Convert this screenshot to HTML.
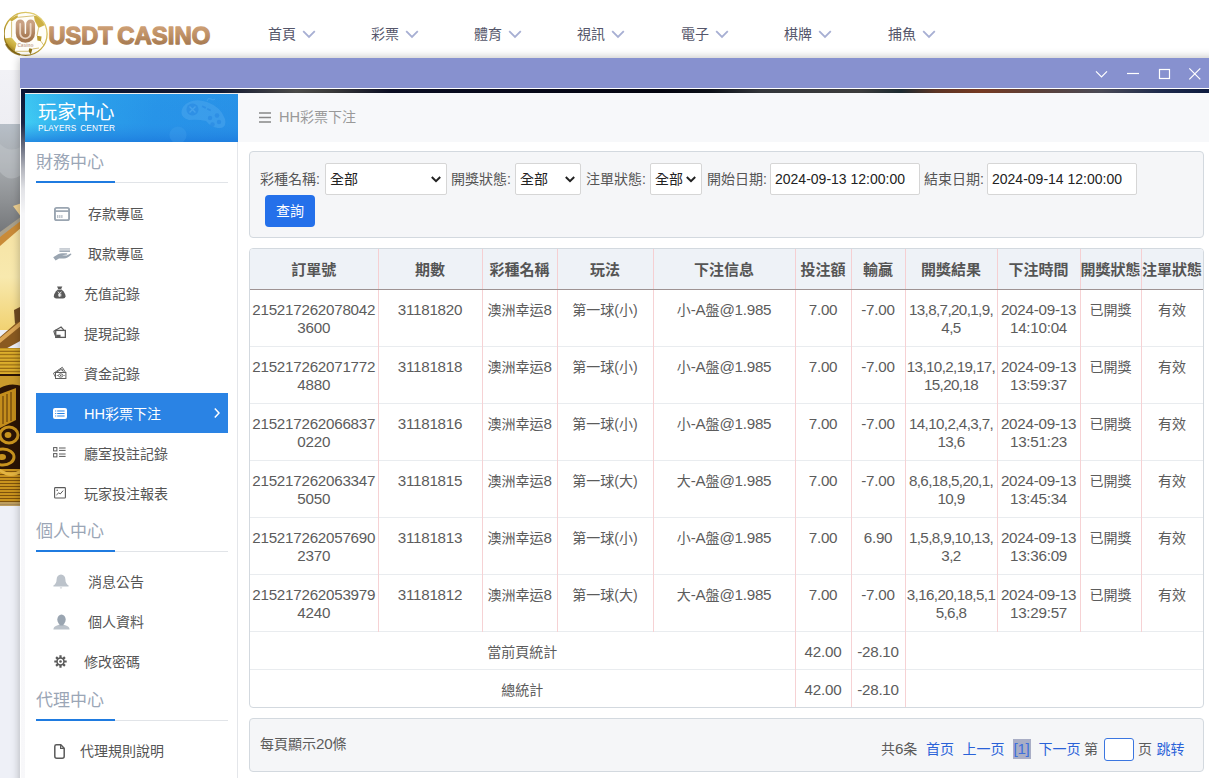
<!DOCTYPE html>
<html lang="zh-Hant">
<head>
<meta charset="utf-8">
<title>USDT CASINO</title>
<style>
*{box-sizing:border-box;margin:0;padding:0}
html,body{width:1209px;height:778px;overflow:hidden;background:#eef0f7}
body{font-family:"Liberation Sans","Noto Sans CJK TC","Noto Sans CJK SC",sans-serif;color:#555;position:relative}
/* ---------- page behind ---------- */
#hdr{position:absolute;left:0;top:0;width:1209px;height:70px;background:#fff}
#sub{position:absolute;left:0;top:70px;width:1209px;height:55px;background:linear-gradient(#f2f2f6,#eeeef3)}
#banner{position:absolute;left:0;top:124px;width:22px;height:382px}
#logo{position:absolute;left:4px;top:6px;width:212px;height:54px}
.nav{position:absolute;top:24px;font-size:14px;color:#55566a;line-height:20px;white-space:nowrap}
.nav svg{position:absolute;left:34px;top:6px}
/* ---------- window ---------- */
#win{position:absolute;left:20px;top:58px;width:1240px;height:760px;box-shadow:0 0 9px rgba(0,0,0,.28)}
#tb{position:absolute;left:0;top:0;width:100%;height:30px;background:#8791cf}
#tb svg{position:absolute;top:0;left:0}
#wb{position:absolute;left:0;top:30px;width:100%;height:730px;background:#fff;border:1px solid #fff;overflow:hidden}
#wbg{position:absolute;left:0;top:0;width:100%;height:100%;
 background:linear-gradient(90deg,#0a1230 0,#131a33 200px,#4a4a48 275px,#3a3a3a 310px,#0a0d22 370px,#03040f 640px,#0c1018 690px,#33363a 740px,#3c3c3c 840px,#1c2a30 880px,#5c3424 915px,#763a22 960px,#5c4038 1015px,#4a4a55 1080px,#1e2a4c 1140px,#0c1a3e 1189px)}
#wbgl{position:absolute;left:0;top:0;width:5px;height:100%;background:linear-gradient(180deg,#0b1534 0,#1a2545 34px,#6a6f80 58px,#b4b6be 80px,#e2e3e7 100px,#f6f6f8 125px,#f8f8fa 100%)}
#app{position:absolute;left:4px;top:4px;width:1236px;height:730px;background:#fff}
/* sidebar */
#side{position:absolute;left:0;top:0;width:213px;height:730px;background:#fff;border-right:1px solid #e4e6ea}
#sh{position:absolute;left:0;top:0;width:213px;height:49px;background:linear-gradient(105deg,#42d2f4 0,#38bbf0 14%,#2b9fea 34%,#2794e8 60%,#2890e7 100%);overflow:hidden;color:#fff}
#sh .t1{position:absolute;left:13px;top:7.5px;font-size:19px;line-height:24px;letter-spacing:.2px}
#sh .t2{position:absolute;left:13px;top:30px;font-size:8.3px;line-height:11px;letter-spacing:.1px;word-spacing:1.5px}
.sec{position:absolute;left:11px;width:192px;height:40px;font-size:17px;color:#9ba6b6;border-bottom:1px solid #e1e4e8}
.sec span{position:absolute;left:0;top:9px;line-height:22px}
.sec i{position:absolute;left:0;bottom:-1px;width:79px;height:2px;background:#1f7be0}
.mi{position:absolute;left:11px;width:192px;height:40px;font-size:14px;line-height:40px;color:#555;white-space:nowrap}
.mi>span{position:absolute;top:1px}
.mi svg{position:absolute}
.mi.on{background:#2a83e4;color:#fff}
/* main */
#main{position:absolute;left:213px;top:0;width:1023px;height:730px;background:#fff}
#crumb{position:absolute;left:0;top:0;width:100%;height:49px;background:#f7f8fa;font-size:14px;color:#999;line-height:49px}
.panel{position:absolute;left:11px;width:955px;background:#f5f6f8;border:1px solid #d3d9df;border-radius:4px}
.flt{font-size:14px;color:#555}
.flt .lb{position:absolute;top:17px;line-height:20px;white-space:nowrap}
.flt .sel,.flt .inp{position:absolute;top:11px;height:32px;background:#fff;border:1px solid #d6d6d6;border-radius:2px;font-size:14px;line-height:30px;color:#222;padding-left:4px;white-space:nowrap}
.flt .sel svg{position:absolute;right:5px;top:12px}
#btn{position:absolute;left:15px;top:43px;width:50px;height:32px;background:#2470ea;border-radius:4px;color:#fff;font-size:14px;line-height:32px;text-align:center}
/* table */
#tp{background:#fff;overflow:hidden}
table{border-collapse:collapse;table-layout:fixed;width:953px;font-size:14px;color:#5c5c5c}
.n{font-size:15.2px;letter-spacing:-.25px}
td.r{white-space:nowrap;letter-spacing:-.62px;overflow:hidden}
th{height:40px;background:#eef2f7;font-weight:bold;font-size:15px;color:#555;border-bottom:1px solid #9e9393;border-left:1px solid #f5cfd2;text-align:center;white-space:nowrap;overflow:hidden;padding:0}
td{vertical-align:top;text-align:center;padding:11px 0 0 0;height:57px;line-height:18.6px;border-top:1px solid #e9ecef;border-left:1px solid #f6d2d4;word-break:break-all}
th:first-child,td:first-child{border-left:0}
th:last-child,tr:not(.sum) td:last-child{border-right:1px solid #f6d2d4}
tr.sum td{height:38px;padding-top:11px}
tr.sum td.nb{border-left:0}
#pg{font-size:14px;color:#5c5c5c;line-height:20px}
#pg span{position:absolute;top:20px;white-space:nowrap}
#pg b{font-weight:normal}
</style>
</head>
<body>
<div id="hdr"></div>
<div id="sub"></div>
<svg id="banner" viewBox="0 0 22 382">
<defs>
<linearGradient id="bg1" x1="0" y1="0" x2="0" y2="1"><stop offset="0" stop-color="#b7bfc8"/><stop offset=".3" stop-color="#a9adb1"/><stop offset=".6" stop-color="#8f9295"/><stop offset="1" stop-color="#686a6d"/></linearGradient>
<linearGradient id="bg2" x1="0" y1="0" x2="0" y2="1"><stop offset="0" stop-color="#f6e3a4"/><stop offset=".5" stop-color="#f8e9ae"/><stop offset="1" stop-color="#f1d272"/></linearGradient>
<pattern id="st1" width="22" height="3.4" patternUnits="userSpaceOnUse"><rect width="22" height="3.4" fill="#dcae2c"/><rect y="2.3" width="22" height="1.1" fill="#8f6210"/></pattern>
<pattern id="st2" width="22" height="3" patternUnits="userSpaceOnUse"><rect width="22" height="3" fill="#c9931e"/><rect y="2" width="22" height="1" fill="#7e520c"/></pattern>
</defs>
<rect width="22" height="125" fill="url(#bg1)"/>
<path d="M0 20 Q10 30 22 22 V50 Q10 60 0 48Z" fill="#c3c8cc" opacity=".45"/>
<path d="M13 82 L22 79 V94Z" fill="#f0d292"/>
<path d="M0 119 L22 100 V206 L0 206Z" fill="url(#bg2)"/>
<path d="M0 112 L22 95 V103 L0 122Z" fill="#c98b38"/>
<path d="M0 108 L22 92 V96 L0 113Z" fill="#a9a08c"/>
<path d="M0 213 L22 194 V216 L0 228Z" fill="#8a5a20"/>
<path d="M0 214 L22 196 V201 L0 219Z" fill="#dba656"/>
<path d="M14 186 L22 182 V196 L15 200Z" fill="#6e4a22"/>
<rect y="224" width="22" height="28" fill="url(#st1)"/>
<path d="M0 213 L0 228 L12 222 L22 216 V212Z" fill="#8a5a20" opacity=".0"/>
<rect y="250" width="22" height="96" fill="#2b1405"/>
<path d="M0 252 H22 V262 Q10 258 0 264Z" fill="#c99a2c"/>
<path d="M0 270 L16 264 V296 L0 304Z" fill="#c48d1c"/>
<path d="M3 272 V300 M7 270 V298 M11 268 V297" stroke="#6b430a" stroke-width="1.2"/>
<ellipse cx="9" cy="311" rx="9" ry="8" fill="none" stroke="#c9931e" stroke-width="3"/>
<ellipse cx="8" cy="311" rx="3.4" ry="3" fill="#c9931e"/>
<ellipse cx="3" cy="333" rx="11" ry="8" fill="none" stroke="#c9931e" stroke-width="3"/>
<ellipse cx="2" cy="333" rx="4" ry="3" fill="#c9931e"/>
<rect y="345" width="22" height="37" fill="url(#st2)"/>
<path d="M0 345 Q11 352 22 345 V348 Q11 356 0 348Z" fill="#e3b442"/>
<rect y="378" width="22" height="4" fill="#b9a27a" opacity=".7"/>
</svg>
<svg id="logo" viewBox="0 0 212 54">
<defs>
<linearGradient id="gtx" x1="0" y1="0" x2="0" y2="1"><stop offset="0" stop-color="#d6a87e"/><stop offset=".5" stop-color="#bd8f64"/><stop offset="1" stop-color="#9c7048"/></linearGradient>
<linearGradient id="gring" x1=".9" y1="0" x2=".1" y2="1"><stop offset="0" stop-color="#e7d680"/><stop offset=".5" stop-color="#c9ad3e"/><stop offset="1" stop-color="#7d5f0c"/></linearGradient>
<linearGradient id="gpat" x1=".8" y1="0" x2=".2" y2="1"><stop offset="0" stop-color="#e2cf66"/><stop offset=".5" stop-color="#c7a93a"/><stop offset="1" stop-color="#7a5c0a"/></linearGradient>
<linearGradient id="gu" x1="0" y1="0" x2="0" y2="1"><stop offset="0" stop-color="#c9a183"/><stop offset="1" stop-color="#a3764e"/></linearGradient>
<clipPath id="cb"><circle cx="21.6" cy="27.9" r="21.8"/></clipPath>
</defs>
<circle cx="21.6" cy="27.9" r="21.8" fill="#fffef8"/>
<g clip-path="url(#cb)">
<path d="M29.9 9.8 L36.1 10.6 L41.1 19 L34.5 22.1 L30.7 14.4Z" fill="#cdb044"/>
<path d="M36.1 10.6 L41.1 19 L43.6 20 L43 12 L38 8Z" fill="#d8c468" opacity=".8"/>
<path d="M.2 32.4 L7.6 31.4 L12.6 37.5 L10.6 45.3 L3.7 42.2Z" fill="url(#gpat)"/>
<path d="M5.3 13.6 L13.3 9 L14.1 11.3 L7.6 15.6Z" fill="#c9ad40"/>
<path d="M33 29.8 L37.6 30.6 L36.9 35.2 L33.4 34.5Z" fill="#b99a2c"/>
<path d="M25.3 42.2 L28.4 43 L26.8 48.3 L24.5 45.3Z" fill="#8f7316"/>
<path d="M3.7 42.2 L10.6 45.3 L14 50 L8 49Z" fill="#7d600c" opacity=".85"/>
<g stroke="#c4a53a" stroke-width=".8" fill="none" opacity=".85"><path d="M14.1 11.3 L29.9 9.8 M7.6 15.6 L7.6 31.4 M34.5 22.1 L33 29.8 M36.9 35.2 L41 41 M28.4 43 L35 42 M10.6 45.3 L24.5 45.3 M26.8 48.3 L26 52 M13.3 9 L15 5.6"/></g>
</g>
<circle cx="21.6" cy="27.9" r="21.5" fill="none" stroke="url(#gring)" stroke-width="1.3"/>
<path d="M2 38 A21.5 21.5 0 0 0 16 48.8" fill="none" stroke="#7d600c" stroke-width="2.2" opacity=".8"/>
<path d="M16.2 17.9 V27.2 a5.2 5.2 0 0 0 10.4 0 V17.9" fill="none" stroke="url(#gu)" stroke-width="8.9" stroke-linecap="round"/>
<path d="M16.2 17.9 V27.2 a5.2 5.2 0 0 0 10.4 0 V17.9" fill="none" stroke="#efdccb" stroke-width="1.8" stroke-linecap="round" opacity=".9"/>
<text x="21.4" y="41.4" text-anchor="middle" font-family="Liberation Sans, sans-serif" font-size="4.8" font-weight="bold" fill="#b48c72" stroke="#fff" stroke-width=".15">Casino</text>
<g font-family="Liberation Sans, sans-serif" font-weight="bold" font-size="24.2" fill="url(#gtx)" stroke="url(#gtx)" stroke-width="1.3" stroke-linejoin="round">
<text x="44.6" y="37.9" textLength="64.1" lengthAdjust="spacingAndGlyphs">USDT</text>
<text x="113.3" y="37.9" textLength="93" lengthAdjust="spacingAndGlyphs">CASINO</text>
</g>
</svg>
<div class="nav" style="left:268px">首頁<svg width="14" height="9" viewBox="0 0 14 9"><path d="M1.2 1.2 L7 7 L12.8 1.2" fill="none" stroke="#a7afd3" stroke-width="1.8"/></svg></div>
<div class="nav" style="left:371px">彩票<svg width="14" height="9" viewBox="0 0 14 9"><path d="M1.2 1.2 L7 7 L12.8 1.2" fill="none" stroke="#a7afd3" stroke-width="1.8"/></svg></div>
<div class="nav" style="left:474px">體育<svg width="14" height="9" viewBox="0 0 14 9"><path d="M1.2 1.2 L7 7 L12.8 1.2" fill="none" stroke="#a7afd3" stroke-width="1.8"/></svg></div>
<div class="nav" style="left:577px">視訊<svg width="14" height="9" viewBox="0 0 14 9"><path d="M1.2 1.2 L7 7 L12.8 1.2" fill="none" stroke="#a7afd3" stroke-width="1.8"/></svg></div>
<div class="nav" style="left:681px">電子<svg width="14" height="9" viewBox="0 0 14 9"><path d="M1.2 1.2 L7 7 L12.8 1.2" fill="none" stroke="#a7afd3" stroke-width="1.8"/></svg></div>
<div class="nav" style="left:784px">棋牌<svg width="14" height="9" viewBox="0 0 14 9"><path d="M1.2 1.2 L7 7 L12.8 1.2" fill="none" stroke="#a7afd3" stroke-width="1.8"/></svg></div>
<div class="nav" style="left:888px">捕魚<svg width="14" height="9" viewBox="0 0 14 9"><path d="M1.2 1.2 L7 7 L12.8 1.2" fill="none" stroke="#a7afd3" stroke-width="1.8"/></svg></div>

<div id="win">
 <div id="tb"><svg width="1189" height="30" viewBox="0 0 1189 30"><g fill="none" stroke="#fff" stroke-width="1.2">
<path d="M1076 13.3 L1081.5 18.8 L1087 13.3"/>
<path d="M1107 15.5 H1119"/>
<rect x="1139.5" y="11.5" width="10" height="9"/>
<path d="M1169.3 10.3 L1180.3 21.3 M1180.3 10.3 L1169.3 21.3"/>
</g></svg></div>
 <div id="wb">
  <div id="wbg"></div><div id="wbgl"></div>
  <div id="app">
   <div id="side"><div id="sh"><svg width="213" height="49" viewBox="0 0 213 49" style="position:absolute;left:0;top:0">
<defs><linearGradient id="shv" x1="0" y1="0" x2="0" y2="1"><stop offset="0" stop-color="#2a9cea" stop-opacity=".25"/><stop offset=".6" stop-color="#2a8ee6" stop-opacity="0"/><stop offset="1" stop-color="#1b78dc" stop-opacity=".75"/></linearGradient></defs>
<rect width="213" height="49" fill="url(#shv)"/>
<g fill="#4ba6ee" opacity=".55">
<path d="M158 14 Q166 4 182 9 Q196 14 200 26 Q202 36 193 35 Q186 34 181 28 Q172 26 164 27 Q153 24 158 14Z"/>
<circle cx="153" cy="42" r="8.6" opacity=".5"/>
</g>
<g fill="#2c8de5" opacity=".8"><circle cx="167.5" cy="16.5" r="6"/><circle cx="185" cy="25" r="2.2"/><circle cx="192" cy="22.5" r="2.2"/><circle cx="187.5" cy="31.5" r="2.2"/><circle cx="194" cy="29" r="2.2"/><rect x="177" y="13.2" width="4" height="1.7" transform="rotate(24 179 14)"/><rect x="182" y="15.8" width="4" height="1.7" transform="rotate(24 184 16.6)"/></g>
<path d="M182 8 q1 -4 4 -2 q2 2 4 0" fill="none" stroke="#4ba6ee" stroke-width="1" opacity=".6"/>
<path d="M164.5 13.5 l6 6 m0 -6 l-6 6" stroke="#4ba6ee" stroke-width="1.4" opacity=".8"/>
<rect width="213" height="1" fill="#f1efee"/>
</svg><div class="t1">玩家中心</div><div class="t2">PLAYERS CENTER</div></div>
<div class="sec" style="top:50px"><span>財務中心</span><i></i></div>
<div class="sec" style="top:419px"><span>個人中心</span><i></i></div>
<div class="sec" style="top:588px"><span>代理中心</span><i></i></div>
<div class="mi" style="top:100px"><svg style="left:18px;top:14px" width="16" height="14" viewBox="0 0 17 15" preserveAspectRatio="none"><rect x="1" y="1" width="15" height="13" rx="1.8" fill="none" stroke="#9aa5b1" stroke-width="2"/><path d="M1 4.4H16" stroke="#9aa5b1" stroke-width="1.8"/><path d="M4 8.6v3.2M6.2 8.6v3.2M8.4 8.6v3.2" stroke="#9aa5b1" stroke-width="1"/></svg><span style="left:52px">存款專區</span></div>
<div class="mi" style="top:140px"><svg style="left:17px;top:15px" width="19" height="13" viewBox="0 0 19 13"><rect x="6.4" y=".2" width="10.6" height="1.5" fill="#bcc3cb"/><rect x="6.4" y="2.4" width="10.6" height="1.5" fill="#9aa5b1"/><path d="M.2 9.2 L5.5 6 Q7 5.2 9 5.2 L13.5 5.2 Q14.6 5.4 14.2 6.6 L9 7.2 L13.6 7.4 L17.6 5.6 Q18.6 5.6 18.3 6.6 Q14.5 10.6 11 10.6 L6 10.4 L2.6 12.6Z" fill="#9aa5b1"/></svg><span style="left:52px">取款專區</span></div>
<div class="mi" style="top:180px"><svg style="left:16.5px;top:13.2px" width="13.4" height="13.2" viewBox="0 0 14 14"><path d="M4.2 .6 L9.8 .6 L8.6 3.2 L5.4 3.2Z" fill="#5a5a5a"/><path d="M5 3.6 L9 3.6 Q13.4 7.6 13.2 11 Q13 13.4 10.6 13.4 L3.4 13.4 Q1 13.4 .8 11 Q.6 7.6 5 3.6Z" fill="#5a5a5a"/><path d="M5.2 6 L7 8.2 L8.8 6 M7 8.2 V11.6 M5.2 8.8 H8.8 M5.2 10.4 H8.8" stroke="#fff" stroke-width=".9" fill="none"/></svg><span style="left:48px">充值記錄</span></div>
<div class="mi" style="top:220px"><svg style="left:17px;top:13.4px" width="13.2" height="12.4" viewBox="0 0 14 13"><path d="M.8 5.4 L8.6 1 L11.6 4.4" fill="none" stroke="#5a5a5a" stroke-width="1.3"/><rect x="2.9" y="4.6" width="10.2" height="7.4" fill="none" stroke="#5a5a5a" stroke-width="1.4"/><path d="M.8 5.4 L2.4 10" stroke="#5a5a5a" stroke-width="1.2"/><rect x="3.4" y="9.2" width="4.6" height="2.6" fill="#5a5a5a"/></svg><span style="left:48px">提現記錄</span></div>
<div class="mi" style="top:260px"><svg style="left:17px;top:13px" width="14" height="14" viewBox="0 0 14 14"><path d="M.4 7.4 L9.3 1.3 L12.4 6.2 M3.6 6.2 L8.8 3 L10.4 5.8" fill="none" stroke="#5e5e5e" stroke-width="1"/><circle cx="9.2" cy="4.4" r=".7" fill="#5e5e5e"/><rect x="2.5" y="6.5" width="10.4" height="6" fill="none" stroke="#5e5e5e" stroke-width="1"/><ellipse cx="7.7" cy="9.5" rx="2.2" ry="1.7" fill="none" stroke="#5e5e5e" stroke-width=".9"/><circle cx="7.7" cy="9.5" r=".75" fill="#5e5e5e"/><circle cx="4.3" cy="9.5" r=".6" fill="#5e5e5e"/><circle cx="11.1" cy="9.5" r=".6" fill="#5e5e5e"/><path d="M.5 7.4 L2.4 11" stroke="#5e5e5e" stroke-width=".9"/></svg><span style="left:48px">資金記錄</span></div>
<div class="mi on" style="top:300px"><svg style="left:17px;top:15px" width="14" height="11" viewBox="0 0 14 11"><rect x="0" y="0" width="14" height="11" rx="2" fill="#fff"/><path d="M4.2 3H11.6M4.2 5.5H11.6M4.2 8H11.6" stroke="#2a83e4" stroke-width="1.1"/><path d="M2.2 3h1M2.2 5.5h1M2.2 8h1" stroke="#2a83e4" stroke-width="1.1"/></svg><svg style="left:177px;top:14px" width="8" height="12" viewBox="0 0 8 12"><path d="M1.8 1.4 L6 6 L1.8 10.6" fill="none" stroke="#fff" stroke-width="1.5"/></svg><span style="left:48px"><span style="font-size:14.6px">HH</span>彩票下注</span></div>
<div class="mi" style="top:340px"><svg style="left:17px;top:14px" width="13" height="11" viewBox="0 0 13 11"><rect x=".6" y=".6" width="3.3" height="3.3" fill="none" stroke="#5a5a5a" stroke-width="1"/><rect x=".6" y="6.6" width="3.3" height="3.3" fill="none" stroke="#5a5a5a" stroke-width="1"/><path d="M6 1H12.6M6 3.4H12.6M6 7H12.6M6 9.4H12.6" stroke="#5a5a5a" stroke-width="1"/></svg><span style="left:48px">廳室投註記錄</span></div>
<div class="mi" style="top:380px"><svg style="left:18px;top:14px" width="12" height="12" viewBox="0 0 12 12"><rect x=".6" y=".6" width="10.8" height="10.4" rx=".8" fill="none" stroke="#5a5a5a" stroke-width="1.1"/><path d="M2.4 8 L4.8 5.8 L6.2 7 L9.2 3.6" fill="none" stroke="#5a5a5a" stroke-width="1"/><circle cx="3.2" cy="3.2" r=".8" fill="#5a5a5a"/></svg><span style="left:48px">玩家投注報表</span></div>
<div class="mi" style="top:468px"><svg style="left:17px;top:13px" width="16" height="16" viewBox="0 0 16 16"><path d="M8 .4 Q12.2 .6 12.4 5.6 Q12.4 9.6 15.6 11.6 L15.6 12.4 L.4 12.4 L.4 11.6 Q3.6 9.6 3.6 5.6 Q3.8 .6 8 .4Z" fill="#bcc3cb"/><path d="M6.6 13.4 H9.4 L8 14.8Z" fill="#bcc3cb"/></svg><span style="left:52px">消息公告</span></div>
<div class="mi" style="top:508px"><svg style="left:17px;top:13px" width="17" height="16" viewBox="0 0 17 16"><path d="M.4 15.6 Q.4 12.4 4 11.4 L6.6 10.4 L10.4 10.4 L13 11.4 Q16.6 12.4 16.6 15.6Z" fill="#bcc3cb"/><ellipse cx="8.5" cy="5.6" rx="4.2" ry="5.2" fill="#9aa5b1"/><path d="M6.4 9 H10.6 L10.4 11.6 H6.6Z" fill="#9aa5b1"/></svg><span style="left:52px">個人資料</span></div>
<div class="mi" style="top:548px"><svg style="left:18px;top:14px" width="13" height="13" viewBox="0 0 13 13"><g stroke="#5a5a5a" stroke-width="2.2" stroke-linecap="butt"><path d="M6.5 .3V12.7M.3 6.5H12.7M2.1 2.1L10.9 10.9M10.9 2.1L2.1 10.9"/></g><circle cx="6.5" cy="6.5" r="4.2" fill="#5a5a5a"/><circle cx="6.5" cy="6.5" r="2.7" fill="#fff"/><circle cx="6.5" cy="6.5" r="1.3" fill="#5a5a5a"/></svg><span style="left:48px">修改密碼</span></div>
<div class="mi" style="top:637px"><svg style="left:17.5px;top:13.5px" width="11" height="15" viewBox="0 0 11 15"><path d="M2.4 .8 H6.8 L10.2 4.2 V12.2 Q10.2 14.2 8.2 14.2 H2.8 Q.8 14.2 .8 12.2 V2.4 Q.8 .8 2.4 .8Z" fill="none" stroke="#5a5a5a" stroke-width="1.5"/><path d="M6.6 1 V4.4 H10" fill="none" stroke="#5a5a5a" stroke-width="1.2"/></svg><span style="left:44px">代理規則說明</span></div>
</div>
   <div id="main"><div id="crumb"><svg style="position:absolute;left:21px;top:19px" width="12" height="11" viewBox="0 0 12 11"><path d="M0 1H12M0 5.5H12M0 10H12" stroke="#888" stroke-width="1.6"/></svg><span style="position:absolute;left:41px"><span style="font-size:14.6px">HH</span>彩票下注</span></div>
<div class="panel flt" style="top:58px;height:87px">
<span class="lb" style="left:10px">彩種名稱:</span><span class="lb" style="left:201px">開獎狀態:</span><span class="lb" style="left:336px">注單狀態:</span><span class="lb" style="left:457px">開始日期:</span><span class="lb" style="left:674px">結束日期:</span><div class="sel" style="left:75px;width:122px">全部<svg width="10" height="7" viewBox="0 0 10 7"><path d="M.8 1 L5 5.2 L9.2 1" fill="none" stroke="#222" stroke-width="2"/></svg></div><div class="sel" style="left:265px;width:66px">全部<svg width="10" height="7" viewBox="0 0 10 7"><path d="M.8 1 L5 5.2 L9.2 1" fill="none" stroke="#222" stroke-width="2"/></svg></div><div class="sel" style="left:400px;width:52px">全部<svg width="10" height="7" viewBox="0 0 10 7"><path d="M.8 1 L5 5.2 L9.2 1" fill="none" stroke="#222" stroke-width="2"/></svg></div><div class="inp" style="left:520px;width:150px">2024-09-13 12:00:00</div><div class="inp" style="left:737px;width:150px">2024-09-14 12:00:00</div><div id="btn">查詢</div></div>
<div class="panel" id="tp" style="top:155px;height:460px"><table><colgroup><col style="width:128px"><col style="width:104px"><col style="width:75px"><col style="width:96px"><col style="width:142px"><col style="width:56px"><col style="width:54px"><col style="width:92px"><col style="width:83px"><col style="width:61px"><col style="width:62px"></colgroup>
<tr><th>訂單號</th><th>期數</th><th>彩種名稱</th><th>玩法</th><th>下注信息</th><th>投注額</th><th>輸贏</th><th>開獎結果</th><th>下注時間</th><th>開獎狀態</th><th>注單狀態</th></tr>
<tr><td class="n">215217262078042<br>3600</td><td class="n">31181820</td><td>澳洲幸运<span class="n">8</span></td><td>第一球(小)</td><td>小<span class="n">-A</span>盤<span class="n">@1.985</span></td><td class="n">7.00</td><td class="n">-7.00</td><td class="r n">13,8,7,20,1,9,<br>4,5</td><td class="n">2024-09-13<br>14:10:04</td><td>已開獎</td><td>有效</td></tr>
<tr><td class="n">215217262071772<br>4880</td><td class="n">31181818</td><td>澳洲幸运<span class="n">8</span></td><td>第一球(小)</td><td>小<span class="n">-A</span>盤<span class="n">@1.985</span></td><td class="n">7.00</td><td class="n">-7.00</td><td class="r n">13,10,2,19,17,<br>15,20,18</td><td class="n">2024-09-13<br>13:59:37</td><td>已開獎</td><td>有效</td></tr>
<tr><td class="n">215217262066837<br>0220</td><td class="n">31181816</td><td>澳洲幸运<span class="n">8</span></td><td>第一球(小)</td><td>小<span class="n">-A</span>盤<span class="n">@1.985</span></td><td class="n">7.00</td><td class="n">-7.00</td><td class="r n">14,10,2,4,3,7,<br>13,6</td><td class="n">2024-09-13<br>13:51:23</td><td>已開獎</td><td>有效</td></tr>
<tr><td class="n">215217262063347<br>5050</td><td class="n">31181815</td><td>澳洲幸运<span class="n">8</span></td><td>第一球(大)</td><td>大<span class="n">-A</span>盤<span class="n">@1.985</span></td><td class="n">7.00</td><td class="n">-7.00</td><td class="r n">8,6,18,5,20,1,<br>10,9</td><td class="n">2024-09-13<br>13:45:34</td><td>已開獎</td><td>有效</td></tr>
<tr><td class="n">215217262057690<br>2370</td><td class="n">31181813</td><td>澳洲幸运<span class="n">8</span></td><td>第一球(小)</td><td>小<span class="n">-A</span>盤<span class="n">@1.985</span></td><td class="n">7.00</td><td class="n">6.90</td><td class="r n">1,5,8,9,10,13,<br>3,2</td><td class="n">2024-09-13<br>13:36:09</td><td>已開獎</td><td>有效</td></tr>
<tr><td class="n">215217262053979<br>4240</td><td class="n">31181812</td><td>澳洲幸运<span class="n">8</span></td><td>第一球(大)</td><td>大<span class="n">-A</span>盤<span class="n">@1.985</span></td><td class="n">7.00</td><td class="n">-7.00</td><td class="r n">3,16,20,18,5,1<br>5,6,8</td><td class="n">2024-09-13<br>13:29:57</td><td>已開獎</td><td>有效</td></tr>
<tr class="sum"><td colspan="5">當前頁統計</td><td class="n">42.00</td><td class="n">-28.10</td><td colspan="4"></td></tr>
<tr class="sum"><td colspan="5">總統計</td><td class="n">42.00</td><td class="n">-28.10</td><td colspan="4"></td></tr>
</table></div>
<div class="panel" id="pg" style="top:625px;height:54px"><span style="left:10px;top:15px">每頁顯示<b class="n">20</b>條</span><span style="left:631px;">共<b class="n">6</b>条</span><span style="left:676px;color:#2a62d8">首页</span><span style="left:712.5px;color:#2a62d8">上一页</span><span style="left:762.5px;color:#3d6fdc;background:#a9aec6;width:18px;text-align:center;font-size:15.2px;letter-spacing:-.25px">[1]</span><span style="left:788.5px;color:#2a62d8">下一页</span><span style="left:834px;">第</span><i style="position:absolute;left:854px;top:19px;width:30px;height:23px;border:1px solid #3b76e0;border-radius:3px;background:#fff"></i><span style="left:888px;">页</span><span style="left:906.5px;color:#2a62d8">跳转</span></div>
</div>
  </div>
 </div>
</div>
</body>
</html>
